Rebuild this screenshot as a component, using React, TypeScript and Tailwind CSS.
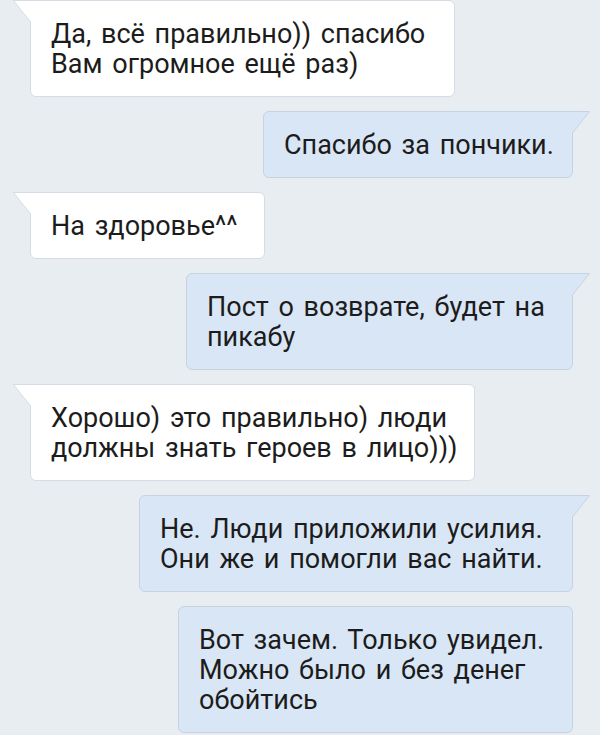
import React from "react";

type Msg = {
  out: boolean;
  lines: string[];
  width: string;
  tail: boolean;
};

const messages: Msg[] = [
  { out: false, lines: ["Да, всё правильно)) спасибо", "Вам огромное ещё раз)"], width: "w-[425px]", tail: true },
  { out: true, lines: ["Спасибо за пончики."], width: "w-[310px]", tail: true },
  { out: false, lines: ["На здоровье^^"], width: "w-[235px]", tail: true },
  { out: true, lines: ["Пост о возврате, будет на", "пикабу"], width: "w-[387px]", tail: true },
  { out: false, lines: ["Хорошо) это правильно) люди", "должны знать героев в лицо)))"], width: "w-[445px]", tail: true },
  { out: true, lines: ["Не. Люди приложили усилия.", "Они же и помогли вас найти."], width: "w-[434px]", tail: true },
  { out: true, lines: ["Вот зачем. Только увидел.", "Можно было и без денег", "обойтись"], width: "w-[395px]", tail: false },
];

const Tail = ({ out }: { out: boolean }) => {
  const fill = out ? "#d9e6f5" : "#ffffff";
  const stroke = out ? "#c6d3e1" : "#d6dce3";
  return (
    <svg
      width="20"
      height="23"
      viewBox="0 0 20 23"
      className={
        out
          ? "absolute -right-[18px] -top-px -scale-x-100"
          : "absolute -left-[18px] -top-px"
      }
    >
      <polygon points="0.5,0.5 20,0.5 20,22 17.5,22" fill={fill} />
      <polyline points="20,0.5 0.5,0.5 17.5,22" fill="none" stroke={stroke} strokeWidth="1" />
    </svg>
  );
};

const Bubble = ({ msg }: { msg: Msg }) => (
  <div
    className={`relative ${msg.width} border rounded-[6px] pt-[18px] pb-[17px] pl-5 pr-1 ${
      msg.out
        ? "self-end mr-[27px] bg-[#d9e6f5] border-[#c6d3e1]"
        : "self-start ml-[30px] bg-white border-[#d6dce3]"
    } ${msg.tail ? (msg.out ? "rounded-tr-none" : "rounded-tl-none") : ""}`}
  >
    {msg.tail && <Tail out={msg.out} />}
    {msg.lines.map((line, i) => (
      <div key={i} className="whitespace-nowrap text-[27px] leading-[30px] text-[#1c1c1c] [word-spacing:3px]">
        {line}
      </div>
    ))}
  </div>
);

export default function App() {
  return (
    <div className="w-[600px] h-[735px] overflow-hidden bg-[#e8edf2] font-['Roboto',sans-serif]">
      <div className="flex flex-col gap-[14px]">
        {messages.map((m, i) => (
          <Bubble key={i} msg={m} />
        ))}
      </div>
    </div>
  );
}
